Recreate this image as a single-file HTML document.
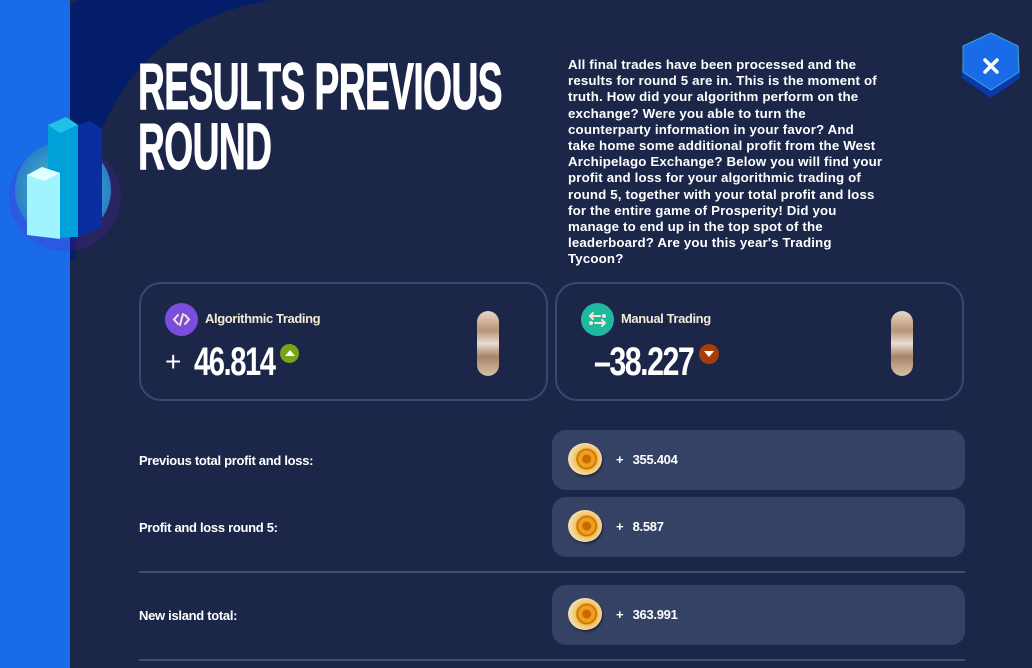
<!DOCTYPE html>
<html><head><style>
*{margin:0;padding:0;box-sizing:border-box}
html,body{width:1032px;height:668px;overflow:hidden}
body{background:#1b2648;font-family:"Liberation Sans",sans-serif;position:relative;color:#fff}
.strip{position:absolute;left:0;top:0;width:70px;height:668px;background:#1a6be8}
h1{position:absolute;left:138px;top:56px;font-family:"Liberation Sans Narrow","Liberation Sans",sans-serif;font-weight:bold;font-size:66px;line-height:60px;letter-spacing:-1px;transform:scaleX(0.563);transform-origin:left top;white-space:nowrap;-webkit-text-stroke:1px #fff}
.para{position:absolute;left:568px;top:57px;font-size:13.3px;font-weight:bold;line-height:16.2px;letter-spacing:0.15px;white-space:nowrap}
.card{position:absolute;top:282px;height:119px;border:2px solid #3a4770;border-radius:22px}
.ic{position:absolute;left:24px;top:19px;width:33px;height:33px;border-radius:50%}
.lbl{position:absolute;left:64px;top:27px;font-size:13px;font-weight:bold;color:#f3ead6;letter-spacing:-0.4px}
.num{position:absolute;top:56px;font-family:"Liberation Sans Narrow","Liberation Sans",sans-serif;font-weight:bold;font-size:40px;letter-spacing:-2px;transform-origin:left top;white-space:nowrap}
.pill{position:absolute;top:27px;width:22px;height:65px;border-radius:11px;background:linear-gradient(180deg,#e8d8c8,#b89478 30%,#e8dcd0 50%,#a88468 70%,#d8c0a8)}
.row{position:absolute;left:552px;width:413px;height:60px;background:#354265;border-radius:14px}
.shell{position:absolute;left:16px;top:13px;width:34px;height:32px;border-radius:50%;background:radial-gradient(circle at 55% 50%,#c86a00 0 4px,#f0a020 5px 8px,#d07800 9px 10px,#f4c060 11px,#f0dca8 16px);box-shadow:1px 2px 2px rgba(0,0,0,.4)}
.val{position:absolute;left:64px;top:22px;font-size:13px;font-weight:bold;letter-spacing:-0.3px;word-spacing:6px}
.rl{position:absolute;left:139px;font-size:13px;font-weight:bold;letter-spacing:-0.3px}
.hr{position:absolute;left:139px;width:826px;height:2px;background:#434f70}
</style></head><body>
<div class="strip"></div>
<svg style="position:absolute;left:70px;top:0" width="300" height="300" viewBox="0 0 300 300">
<path d="M0,12 Q0,0 12,0 L200,0 C90,20 15,90 5,260 L0,260 Z" fill="#031d6b"/>
</svg>
<svg style="position:absolute;left:0;top:105px" width="130" height="150" viewBox="0 0 130 150">
<defs><radialGradient id="g" cx="50%" cy="50%" r="50%"><stop offset="0" stop-color="#4fd0c0"/><stop offset="1" stop-color="#2a80c8"/></radialGradient></defs>
<ellipse cx="65" cy="92" rx="56" ry="54" fill="#6020c0" opacity=".22"/>
<circle cx="63" cy="85" r="48" fill="url(#g)"/>
<polygon points="48,20 66,12 78,20 78,132 48,132" fill="#00a0d8"/>
<polygon points="48,20 66,12 78,20 60,28" fill="#20c0e8"/>
<polygon points="78,20 90,16 102,24 102,122 78,132" fill="#0a2ea0"/>
<polygon points="27,70 42,62 60,68 60,134 27,130" fill="#a0f4ff"/>
<polygon points="27,70 42,62 60,68 44,76" fill="#e0ffff"/>
</svg>
<h1>RESULTS PREVIOUS<br>ROUND</h1>
<div class="para">All final trades have been processed and the<br>results for round 5 are in. This is the moment of<br>truth. How did your algorithm perform on the<br>exchange? Were you able to turn the<br>counterparty information in your favor? And<br>take home some additional profit from the West<br>Archipelago Exchange? Below you will find your<br>profit and loss for your algorithmic trading of<br>round 5, together with your total profit and loss<br>for the entire game of Prosperity! Did you<br>manage to end up in the top spot of the<br>leaderboard? Are you this year's Trading<br>Tycoon?</div>
<svg style="position:absolute;left:960px;top:32px" width="62" height="68" viewBox="0 0 62 68">
<polygon points="31,2 58,16 60,46 31,66 2,46 3,16" fill="#0a3aa8"/>
<polygon points="31,1 58,14 59,40 31,58 3,40 3,14" fill="#1a6be8" stroke="#3aa8d8" stroke-width="1"/>
<path d="M25 28 L37 40 M37 28 L25 40" stroke="#fff" stroke-width="3.5" stroke-linecap="round"/>
</svg>
<div class="card" style="left:139px;width:409px">
<div class="ic" style="background:#7b4ddc"><svg width="33" height="33"><path d="M13 12 L9 16.5 L13 21 M20 12 L24 16.5 L20 21 M18 11 L15 22" stroke="#f6e8c8" stroke-width="2" fill="none" stroke-linecap="round"/></svg></div>
<div class="lbl">Algorithmic Trading</div>
<div class="num" style="left:24px;font-family:'Liberation Sans';font-weight:normal;font-size:28px;top:62px;letter-spacing:0">+</div>
<div class="num" style="left:53px;transform:scaleX(0.73)">46.814</div>
<div style="position:absolute;left:139px;top:60px;width:19px;height:19px;border-radius:50%;background:#7aa418"><div style="margin:6px auto;width:0;height:0;border-left:5px solid transparent;border-right:5px solid transparent;border-bottom:6px solid #fff"></div></div>
<div class="pill" style="left:336px"></div>
</div>
<div class="card" style="left:555px;width:409px">
<div class="ic" style="background:#20b8a0"><svg width="33" height="33"><path d="M9 13 H19 M12 10 L9 13 L12 16 M14 20 H24 M21 17 L24 20 L21 23" stroke="#f6e8c8" stroke-width="2" fill="none" stroke-linecap="round"/><circle cx="23" cy="13" r="2" fill="#f6e8c8"/><circle cx="10" cy="20" r="2" fill="#f6e8c8"/></svg></div>
<div class="lbl">Manual Trading</div>
<div class="num" style="left:37px;transform:scaleX(0.76)">–38.227</div>
<div style="position:absolute;left:142px;top:60px;width:20px;height:20px;border-radius:50%;background:#a83c0a"><div style="margin:7px auto;width:0;height:0;border-left:5px solid transparent;border-right:5px solid transparent;border-top:6px solid #fff"></div></div>
<div class="pill" style="left:334px"></div>
</div>
<div class="rl" style="top:453px">Previous total profit and loss:</div>
<div class="row" style="top:430px"><div class="shell"></div><div class="val">+ 355.404</div></div>
<div class="rl" style="top:520px">Profit and loss round 5:</div>
<div class="row" style="top:497px"><div class="shell"></div><div class="val">+ 8.587</div></div>
<div class="hr" style="top:571px"></div>
<div class="rl" style="top:608px">New island total:</div>
<div class="row" style="top:585px"><div class="shell"></div><div class="val">+ 363.991</div></div>
<div class="hr" style="top:659px"></div>
</body></html>
